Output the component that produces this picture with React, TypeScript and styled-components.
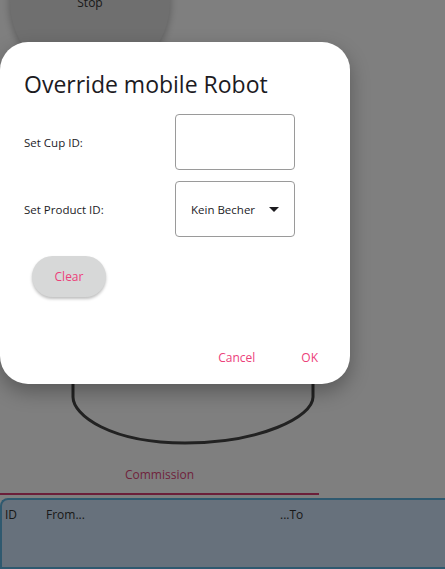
import React from "react"
import styled, { createGlobalStyle } from "styled-components"

const GlobalStyle = createGlobalStyle`
  html, body {
    margin: 0;
    padding: 0;
    background: #ffffff;
    font-family: "Open Sans", "Noto Sans", sans-serif;
  }
`

const pink = "#ec407a"

const App: React.FunctionComponent = () => {
  return (
    <Screen>
      <GlobalStyle />
      <Page>
        <StopArea>
          <StopButton>Stop</StopButton>
        </StopArea>
        <CupArea>
          <svg width="445" height="172" viewBox="0 0 445 172">
            <path
              d="M73 0 L73 122 C73 140 110 168 185 168 C260 168 313 142 313 122 L313 0"
              fill="none"
              strokeWidth="3"
            />
          </svg>
        </CupArea>
        <Tabs>
          <Tab active>Commission</Tab>
        </Tabs>
        <Table>
          <HeaderRow>
            <Cell width={41}>ID</Cell>
            <Cell width={234}>From...</Cell>
            <Cell>...To</Cell>
          </HeaderRow>
        </Table>
      </Page>

      <Backdrop>
        <Dialog>
          <Title>Override mobile Robot</Title>
          <Form>
            <Label>Set Cup ID:</Label>
            <Field />
            <Label>Set Product ID:</Label>
            <Field>
              <SelectText>Kein Becher</SelectText>
              <Caret />
            </Field>
          </Form>
          <ClearButton>Clear</ClearButton>
          <Actions>
            <TextButton>Cancel</TextButton>
            <TextButton>OK</TextButton>
          </Actions>
        </Dialog>
      </Backdrop>
    </Screen>
  )
}

const Screen = styled.div`
  position: relative;
  width: 445px;
  height: 569px;
  overflow: hidden;
`

const Page = styled.div`
  display: flex;
  flex-direction: column;
  background: #ffffff;
  height: 100%;
`

const StopArea = styled.div`
  height: 80px;
  padding-left: 10px;
`

const StopButton = styled.div`
  width: 160px;
  height: 160px;
  margin-top: -78px;
  border-radius: 50%;
  background: #dedede;
  box-shadow: 0 2px 8px rgba(0, 0, 0, 0.3);
  display: flex;
  align-items: center;
  justify-content: center;
  font-size: 12px;
  color: #333;
`

const CupArea = styled.div`
  height: 172px;
  margin-top: 195px;
  svg {
    display: block;
  }
  path {
    stroke: #444;
  }
`

const Tabs = styled.div`
  display: flex;
  width: 319px;
  margin-top: 9px;
`

const Tab = styled.div<{ active?: boolean }>`
  flex: 1;
  text-align: center;
  font-size: 12px;
  color: ${(p) => (p.active ? "#e0457a" : "#333")};
  padding: 10px 0 10px;
  border-bottom: 2px solid ${(p) => (p.active ? "#d63d73" : "transparent")};
`

const Table = styled.div`
  flex: 1;
  margin-top: 3px;
  margin-right: -10px;
  border: 2px solid #5fb2de;
  border-right: none;
  border-top-left-radius: 8px;
  background: #cfe3f8;
`

const HeaderRow = styled.div`
  display: flex;
  padding: 6px 0 0 3px;
  font-size: 12px;
  color: #333;
`

const Cell = styled.div<{ width?: number }>`
  width: ${(p) => (p.width ? `${p.width}px` : "auto")};
`

const Backdrop = styled.div`
  position: absolute;
  inset: 0;
  background: rgba(0, 0, 0, 0.5);
`

const Dialog = styled.div`
  position: absolute;
  left: 0;
  top: 42px;
  width: 350px;
  height: 342px;
  box-sizing: border-box;
  padding: 24px 24px 0;
  background: #ffffff;
  border-radius: 28px;
  box-shadow: 0 8px 20px rgba(0, 0, 0, 0.3);
  display: flex;
  flex-direction: column;
`

const Title = styled.h1`
  margin: 0;
  font-size: 23px;
  font-weight: 400;
  line-height: 36px;
  color: #1c1b1f;
`

const Form = styled.div`
  display: grid;
  grid-template-columns: 151px 120px;
  grid-auto-rows: 56px;
  row-gap: 11px;
  align-items: center;
  margin-top: 12px;
`

const Label = styled.div`
  font-size: 11.5px;
  color: #1c1b1f;
`

const Field = styled.div`
  box-sizing: border-box;
  height: 56px;
  border: 1px solid #9a9a9a;
  border-radius: 4px;
  display: flex;
  align-items: center;
  padding: 0 15px;
`

const SelectText = styled.span`
  flex: 1;
  font-size: 11.5px;
  color: #1c1b1f;
`

const Caret = styled.span`
  width: 0;
  height: 0;
  border-left: 5px solid transparent;
  border-right: 5px solid transparent;
  border-top: 5px solid #1c1b1f;
`

const ClearButton = styled.button`
  align-self: flex-start;
  margin: 19px 0 0 8px;
  width: 74px;
  height: 41px;
  border: none;
  border-radius: 21px;
  background: #d7d8d8;
  box-shadow: 0 2px 3px rgba(0, 0, 0, 0.25);
  font-family: inherit;
  font-size: 12px;
  color: ${pink};
`

const Actions = styled.div`
  display: flex;
  justify-content: flex-end;
  gap: 46px;
  margin-top: 52px;
  padding-right: 8px;
`

const TextButton = styled.button`
  border: none;
  background: none;
  padding: 0;
  font-family: inherit;
  font-size: 12px;
  color: ${pink};
`

export default App
